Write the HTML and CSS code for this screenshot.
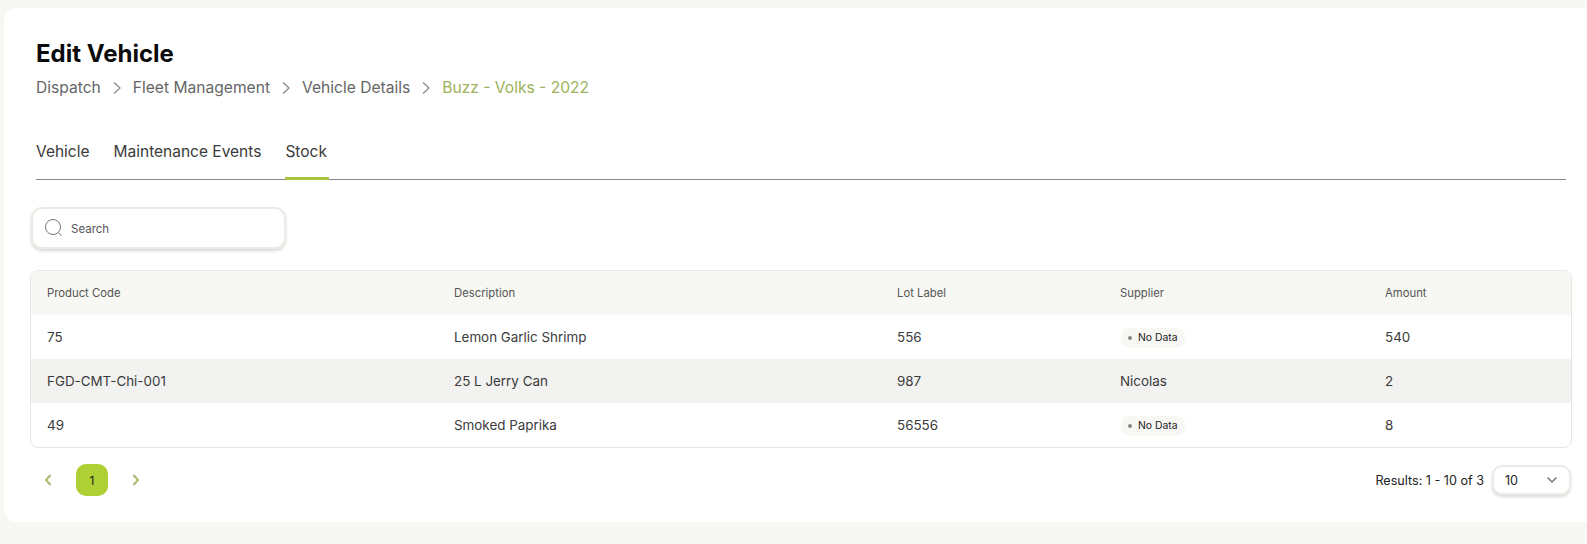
FILE: index.html
```html
<!DOCTYPE html>
<html lang="en">
<head>
<meta charset="utf-8">
<title>Edit Vehicle</title>
<link rel="stylesheet" href="styles.css">
</head>
<body>
<main class="card">
  <h1 class="title">Edit Vehicle</h1>
  <nav class="crumbs">
    <span>Dispatch</span>
    <svg class="crumb-sep" viewBox="0 0 12 14"><path d="M3 1.500l6 5.500-6 5.500"/></svg>
    <span>Fleet Management</span>
    <svg class="crumb-sep" viewBox="0 0 12 14"><path d="M3 1.500l6 5.500-6 5.500"/></svg>
    <span>Vehicle Details</span>
    <svg class="crumb-sep" viewBox="0 0 12 14"><path d="M3 1.500l6 5.500-6 5.500"/></svg>
    <span class="crumb-current">Buzz - Volks - 2022</span>
  </nav>
  <div class="tabs">
    <a class="tab">Vehicle</a>
    <a class="tab">Maintenance Events</a>
    <a class="tab tab-active">Stock</a>
  </div>
  <div class="search">
    <svg class="search-icon" viewBox="0 0 18 18"><circle cx="8" cy="8" r="7.500"/><path d="M13.500 13.500l3 3.500"/></svg>
    <span class="search-text">Search</span>
  </div>
  <div class="table-wrap">
    <table class="table">
      <thead>
        <tr><th>Product Code</th><th>Description</th><th>Lot Label</th><th>Supplier</th><th>Amount</th></tr>
      </thead>
      <tbody>
        <tr><td>75</td><td>Lemon Garlic Shrimp</td><td>556</td><td><span class="badge"><i class="dot"></i>No Data</span></td><td>540</td></tr>
        <tr class="row-alt"><td>FGD-CMT-Chi-001</td><td>25 L Jerry Can</td><td>987</td><td>Nicolas</td><td>2</td></tr>
        <tr><td>49</td><td>Smoked Paprika</td><td>56556</td><td><span class="badge"><i class="dot"></i>No Data</span></td><td>8</td></tr>
      </tbody>
    </table>
  </div>
  <div class="pager">
    <div class="pages">
      <svg class="pg-arrow" viewBox="0 0 8 12"><path d="M6.500 1L2 6l4.500 5"/></svg>
      <span class="page-num">1</span>
      <svg class="pg-arrow" viewBox="0 0 8 12"><path d="M1.500 1L6 6l-4.500 5"/></svg>
    </div>
    <div class="results">
      <span>Results: 1 - 10 of 3</span>
      <div class="select">
        <span>10</span>
        <svg class="select-caret" viewBox="0 0 12 8"><path d="M1.500 1.500L6 6l4.500-4.500"/></svg>
      </div>
    </div>
  </div>
</main>
</body>
</html>
```
FILE: styles.css
```css
* { box-sizing: border-box; }
html, body { margin: 0; height: 100%; }
body {
  background: #f7f7f3;
  font-family: Inter, "Liberation Sans", sans-serif;
  color: #333;
  padding: 8px 0 0 4px;
  overflow: hidden;
}
.card {
  background: #fff;
  height: 514px;
  border-radius: 14px 0 0 14px;
  padding: 31px 0 0 26px;
  display: flex;
  flex-direction: column;
}
.title {
  margin: 0 0 0 6px;
  font-size: 24px;
  line-height: 30px;
  font-weight: 700;
  color: #0b0b0b;
}
.crumbs {
  margin: 8px 0 0 6px;
  display: flex;
  align-items: center;
  font-size: 15.600px;
  line-height: 22px;
  color: #666;
}
.crumb-sep {
  width: 12px;
  height: 14px;
  margin: 0 10px;
  fill: none;
  stroke: #888;
  stroke-width: 1.200;
}
.crumb-current { color: #9db25a; }
.tabs {
  margin: 39px 21px 0 6px;
  display: flex;
  gap: 24px;
  border-bottom: 1px solid #888;
  height: 42px;
}
.tab {
  font-size: 15.500px;
  line-height: 22px;
  color: #3a3a3a;
  padding-top: 3px;
  height: 42px;
}
.tab-active {
  border-bottom: 3px solid #a8c43c;
  padding-right: 2px;
}
.search {
  margin: 27px 0 0 1px;
  width: 255px;
  height: 42px;
  border: 2px solid #ebebe6;
  border-radius: 11px;
  box-shadow: 0 2px 3px rgba(60, 60, 50, .2);
  display: flex;
  align-items: center;
  gap: 8px;
  padding-left: 12px;
  font-size: 11.500px;
  color: #555;
}
.search-text { padding-top: 1px; }
.search-icon {
  width: 18px;
  height: 18px;
  fill: none;
  stroke: #777;
  stroke-width: 1;
}
.table-wrap {
  margin: 21px 15px 0 0;
  border: 1px solid #e6e6e2;
  border-radius: 8px;
  overflow: hidden;
}
.table {
  width: 100%;
  border-collapse: collapse;
  table-layout: fixed;
}
.table th {
  background: #f7f7f3;
  height: 44px;
  padding: 0 16px;
  text-align: left;
  font-size: 11.300px;
  font-weight: 400;
  color: #555;
}
.table td {
  height: 44px;
  padding: 0 16px;
  font-size: 13.400px;
  color: #3a3a3a;
}
.table th:nth-child(1) { width: 407px; }
.table th:nth-child(2) { width: 443px; }
.table th:nth-child(3) { width: 223px; }
.table th:nth-child(4) { width: 265px; }
.row-alt td { background: #f2f2f0; }
.badge {
  display: inline-flex;
  align-items: center;
  height: 20px;
  padding: 0 8px;
  border-radius: 10px;
  background: #f7f7f3;
  font-size: 10.400px;
  color: #222;
}
.dot {
  width: 4px;
  height: 4px;
  border-radius: 50%;
  background: #888;
  margin-right: 6px;
}
.pager {
  margin: 16px 16px 0 0;
  display: flex;
  justify-content: space-between;
  align-items: center;
  height: 32px;
}
.pages {
  display: flex;
  align-items: center;
  gap: 24px;
  padding-left: 14px;
}
.pg-arrow {
  width: 8px;
  height: 12px;
  fill: none;
  stroke: #a9bd70;
  stroke-width: 2;
}
.page-num {
  width: 32px;
  height: 32px;
  border-radius: 10px;
  background: #aed035;
  display: flex;
  align-items: center;
  justify-content: center;
  font-size: 12px;
  color: #222;
}
.results {
  display: flex;
  align-items: center;
  gap: 8px;
  font-size: 12.600px;
  color: #222;
}
.select {
  width: 79px;
  height: 30px;
  border: 2px solid #ebebe6;
  border-radius: 10px;
  box-shadow: 0 2px 3px rgba(60, 60, 50, .2);
  display: flex;
  align-items: center;
  justify-content: space-between;
  padding: 0 11px;
}
.select-caret {
  width: 12px;
  height: 8px;
  fill: none;
  stroke: #777;
  stroke-width: 1.500;
}
```
